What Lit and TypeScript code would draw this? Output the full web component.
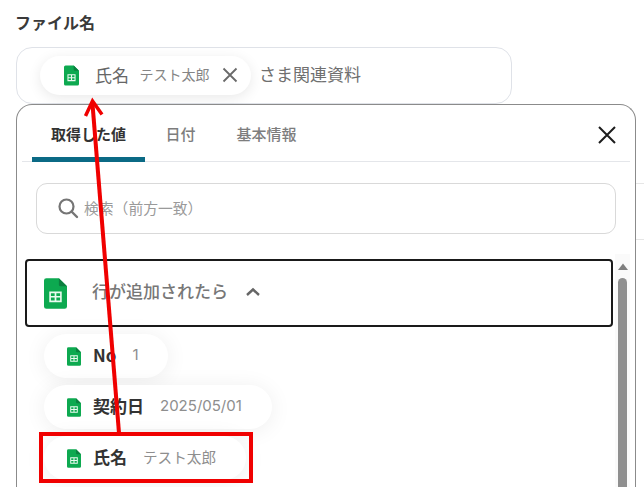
import { LitElement, html, css } from "lit";
import { customElement } from "lit/decorators.js";

const sheet = (cls: string) => html`<svg class=${cls} viewBox="0 0 24 32" aria-hidden="true">
  <path d="M2.5 0H15.5L24 8.5V29.5A2.5 2.5 0 0 1 21.500 32H2.500A2.500 2.500 0 0 1 0 29.500V2.500A2.500 2.500 0 0 1 2.500 0Z" fill="#0da950"/>
  <path d="M15.500 0L24 8.500H17.500A2 2 0 0 1 15.500 6.500Z" fill="#0b7f3f"/>
  <path d="M5.500 14H18.500V25H5.500Z M7.200 15.700V18.700H11.100V15.700Z M12.900 15.700V18.700H16.800V15.700Z M7.200 20.300V23.300H11.100V20.300Z M12.900 20.300V23.300H16.800V20.300Z" fill="#eafbf0" fill-rule="evenodd"/>
</svg>`;

@customElement("app-root")
export class AppRoot extends LitElement {
  static styles = css`
    :host {
      display: block;
      position: relative;
      width: 644px;
      height: 487px;
      overflow: hidden;
      background: #fff;
      font-family: "Noto Sans CJK JP", "Noto Sans", sans-serif;
      color: #333;
    }
    .label {
      margin: 0;
      padding: 11px 0 0 15px;
      height: 35px;
      box-sizing: border-box;
      font-size: 16px;
      line-height: 23px;
      font-weight: 700;
      color: #3a3a3a;
    }
    .field {
      box-sizing: border-box;
      margin: 12px 0 0 16px;
      width: 496px;
      height: 57px;
      border: 1px solid #dfe2e8;
      border-radius: 16px;
      display: flex;
      align-items: center;
      padding: 0 0 1px 23px;
      background: #fff;
      font-size: 17px;
      color: #6f6f6f;
    }
    .chip {
      display: flex;
      align-items: center;
      box-sizing: border-box;
      width: 211px;
      height: 39px;
      border-radius: 20px;
      background: #fff;
      box-shadow: 0 3px 14px rgba(0, 0, 0, 0.09);
      padding-left: 24px;
      flex: none;
    }
    .ico-top { width: 15px; height: 21px; flex: none; }
    .chip .name { margin-left: 16px; font-size: 17px; color: #666; padding-bottom: 2px; }
    .chip .val { margin-left: 10.500px; font-size: 14px; color: #858585; padding-bottom: 2px; }
    .chip .x { margin-left: 12.500px; width: 16px; height: 16px; flex: none; }
    .field .rest { margin-left: 8px; padding-bottom: 3px; }
    .row { display: flex; margin: 0 0 0 16px; }
    .panel {
      box-sizing: border-box;
      width: 620px;
      height: 420px;
      flex: none;
      border: 1px solid #8b8b8b;
      border-bottom: none;
      border-radius: 16px 16px 0 0;
      background: #fff;
      display: flex;
      flex-direction: column;
    }
    .side { flex: 1; }
    .side div {
      height: 55px;
      margin-top: 79px;
      border-top: 1px solid #e6e6e6;
      border-bottom: 1px solid #e6e6e6;
    }
    .tabs {
      height: 57px;
      box-sizing: border-box;
      margin: 0 5px 0 5px;
      padding-left: 10px;
      border-bottom: 1px solid #e4e6ea;
      display: flex;
      align-items: stretch;
      position: relative;
      flex: none;
    }
    .tab {
      box-sizing: border-box;
      font-size: 15px;
      font-weight: 500;
      color: #7d7d7d;
      padding-top: 18px;
      line-height: 22px;
    }
    .tab.on {
      width: 113px;
      text-align: center;
      color: #333;
      font-weight: 700;
      border-bottom: 5px solid #0b6a85;
      border-radius: 5px 5px 0 0;
      margin-bottom: -1px;
    }
    .tab.two { margin-left: 20.500px; }
    .tab.three { margin-left: 41px; }
    .close { position: absolute; right: 13px; top: 20px; width: 20px; height: 20px; }
    .search {
      box-sizing: border-box;
      flex: none;
      margin: 21px 0 0 19px;
      width: 580px;
      height: 51px;
      border: 1px solid #d9d9d9;
      border-radius: 11px;
      display: flex;
      align-items: center;
      padding-left: 20px;
      color: #9a9a9a;
    }
    .search svg { width: 22px; height: 22px; flex: none; margin-right: 5px; margin-top: -2px; }
    .search span { font-size: 14.800px; padding-bottom: 3px; }
    .body { display: flex; flex: 1; margin-top: 20px; min-height: 0; }
    .list { width: 598px; flex: none; padding: 5px 0 0 8px; box-sizing: border-box; }
    .section {
      box-sizing: border-box;
      width: 588px;
      height: 68px;
      border: 2px solid #1a1a1a;
      border-radius: 4px;
      display: flex;
      align-items: center;
      padding-left: 17px;
      font-size: 17px;
      font-weight: 500;
      color: #777;
    }
    .ico-big { width: 23px; height: 33px; flex: none; }
    .section .t { margin-left: 25px; padding-bottom: 6px; }
    .section svg.chev { width: 16px; height: 10px; margin-left: 17px; flex: none; margin-top: -2px; }
    .items { display: flex; flex-direction: column; gap: 7px; margin: 7px 0 0 19px; align-items: flex-start; }
    .item {
      box-sizing: border-box;
      height: 44px;
      border-radius: 22px;
      background: #fff;
      box-shadow: 0 2px 22px rgba(0, 0, 0, 0.07);
      display: flex;
      align-items: center;
      padding: 0 30px 0 23px;
    }
    .ico-sm { width: 14px; height: 21px; flex: none; }
    .item .name { margin-left: 12px; font-size: 17px; font-weight: 700; color: #333; padding-bottom: 3px; }
    .item .val { margin-left: 16px; font-size: 15px; color: #8e8e8e; font-family: Inter, "Noto Sans CJK JP", sans-serif; padding-bottom: 3px; }
    .item .val.ja { font-family: "Noto Sans CJK JP", sans-serif; font-size: 14.600px; }
    .scroll {
      width: 15px;
      flex: none;
      background: #fafafa;
      display: flex;
      flex-direction: column;
      align-items: center;
    }
    .scroll .up { width: 10px; height: 7px; margin-top: 9px; flex: none; }
    .scroll .thumb { width: 9px; flex: 1; margin-top: 8px; background: #8f8f8f; border-radius: 5px 5px 0 0; }
    .mark {
      position: absolute;
      left: 39px;
      top: 432px;
      width: 214px;
      height: 51px;
      box-sizing: border-box;
      border: 4px solid #f00000;
      pointer-events: none;
    }
    .arrow { position: absolute; left: 0; top: 0; width: 644px; height: 487px; pointer-events: none; }
  `;

  render() {
    return html`
      <h2 class="label">ファイル名</h2>
      <div class="field">
        <div class="chip">
          ${sheet("ico-top")}
          <span class="name">氏名</span>
          <span class="val">テスト太郎</span>
          <svg class="x" viewBox="0 0 16 16"><path d="M1.500 1.500L14.500 14.500M14.500 1.500L1.500 14.500" stroke="#6a6a6a" stroke-width="1.800" fill="none"/></svg>
        </div>
        <span class="rest">さま関連資料</span>
      </div>
      <div class="row">
        <div class="panel">
          <div class="tabs">
            <div class="tab on">取得した値</div>
            <div class="tab two">日付</div>
            <div class="tab three">基本情報</div>
            <svg class="close" viewBox="0 0 20 20"><path d="M2 2L18 18M18 2L2 18" stroke="#1c1c1c" stroke-width="2" fill="none"/></svg>
          </div>
          <div class="search">
            <svg viewBox="0 0 22 22"><circle cx="9.500" cy="9.500" r="7" stroke="#757575" stroke-width="2.200" fill="none"/><path d="M14.500 14.500L20 20" stroke="#757575" stroke-width="2.400" stroke-linecap="round"/></svg>
            <span>検索（前方一致）</span>
          </div>
          <div class="body">
            <div class="list">
              <div class="section">
                ${sheet("ico-big")}
                <span class="t">行が追加されたら</span>
                <svg class="chev" viewBox="0 0 16 10"><path d="M2 8L8 2.500L14 8" stroke="#666" stroke-width="2.400" fill="none"/></svg>
              </div>
              <div class="items">
                <div class="item">${sheet("ico-sm")}<span class="name">No</span><span class="val">1</span></div>
                <div class="item">${sheet("ico-sm")}<span class="name">契約日</span><span class="val">2025/05/01</span></div>
                <div class="item">${sheet("ico-sm")}<span class="name">氏名</span><span class="val ja">テスト太郎</span></div>
              </div>
            </div>
            <div class="scroll">
              <svg class="up" viewBox="0 0 10 7"><path d="M5 0.500L10 7H0Z" fill="#7f7f7f"/></svg>
              <div class="thumb"></div>
            </div>
          </div>
        </div>
        <div class="side"><div></div></div>
      </div>
      <div class="mark"></div>
      <svg class="arrow" viewBox="0 0 644 487">
        <path d="M119 433L92.500 104" stroke="#f00000" stroke-width="4" fill="none"/>
        <path d="M85.500 116L92.500 101L102 114.500" stroke="#f00000" stroke-width="3.500" fill="none"/>
      </svg>
    `;
  }
}
